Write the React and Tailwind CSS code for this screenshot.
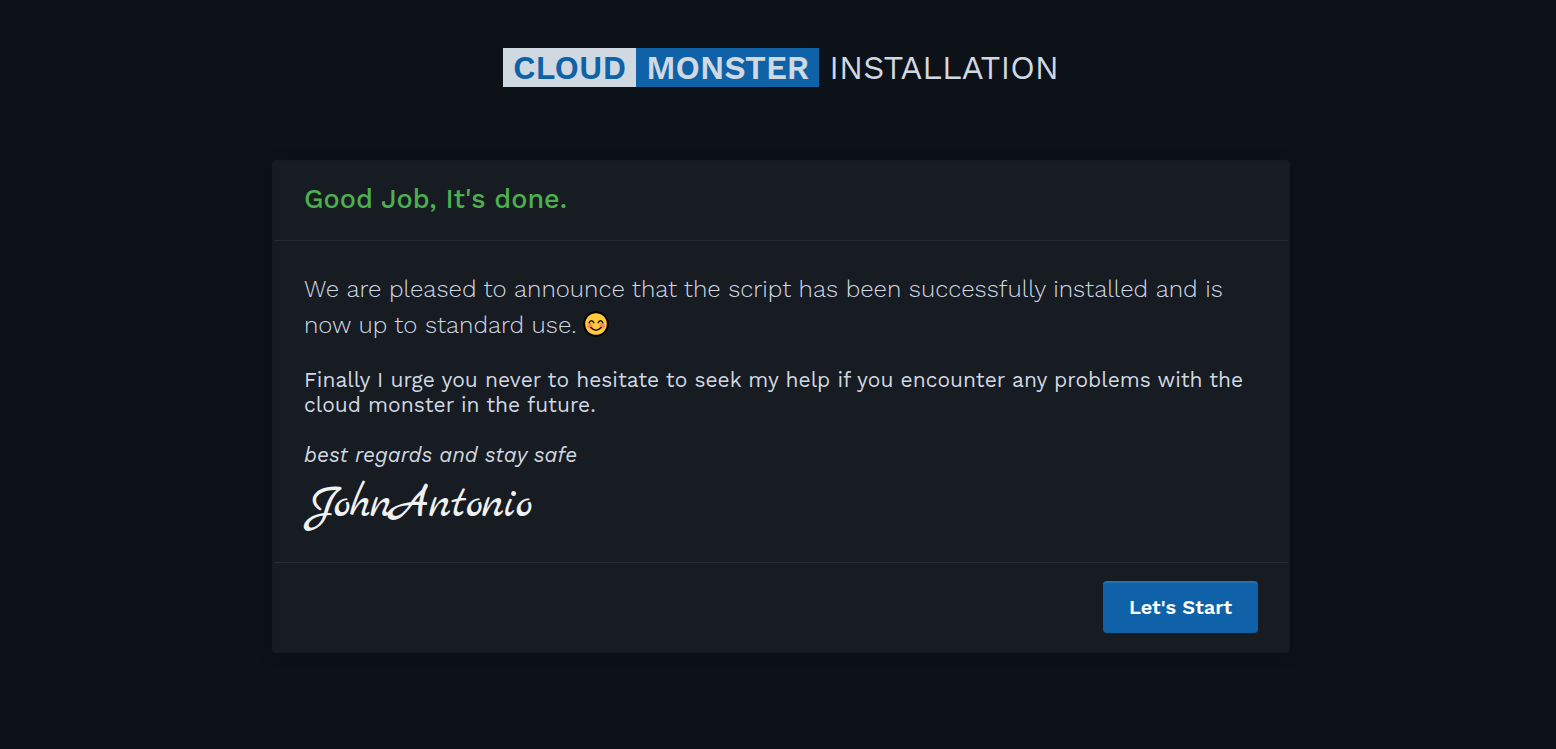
function SmileIcon() {
  return (
    <svg className="ml-[6px] inline-block size-[26px] align-[-4px]" viewBox="0 0 26 26" role="img" aria-label="Smiling face">
      <circle cx="13" cy="13" r="11.8" fill="#ffc83d" stroke="#000" strokeWidth="2" />
      <circle cx="6.9" cy="14.8" r="2.7" fill="#f98b5b" />
      <circle cx="19.1" cy="14.8" r="2.7" fill="#f98b5b" />
      <g fill="none" stroke="#1c1208" strokeWidth="1.5" strokeLinecap="round">
        <path d="M6.2 11.6Q8.4 8 10.8 11.6" />
        <path d="M15.2 11.6Q17.6 8 19.8 11.6" />
        <path d="M7.8 16.6Q13 22 18.2 16.6" />
      </g>
    </svg>
  );
}

export default function App() {
  return (
    <div className="min-h-screen bg-[#0d1118] py-12 pl-[6px] font-['Work_Sans','Inter',sans-serif] text-[#d0d8e2]">
      <h1 className="flex items-center justify-center text-[33px] leading-[39px] uppercase">
        <span className="bg-[#d0d8e1] px-[10px] font-semibold text-[#0f62a7]">Cloud</span>
        <span className="bg-[#0f62a7] px-[10px] font-semibold">Monster</span>
        <span className="ml-[10px]">Installation</span>
      </h1>

      <main className="mx-auto mt-[73px] max-w-[1018px] rounded border-2 border-[#161a21] bg-[#171b22] shadow-[0_2px_16px_rgba(0,0,0,0.15)]">
        <header className="border-b border-[#272c34] px-[30px] pt-5 pb-6">
          <h2 className="text-[27px] leading-[34px] font-medium text-[#4caf50]">Good Job, It's done.</h2>
        </header>

        <div className="px-[30px] pt-[30px] pb-6">
          <p className="text-[24px] leading-9 font-light">
            We are pleased to announce that the script has been successfully installed and is now up to standard use.
            <SmileIcon />
          </p>
          <p className="mt-6 text-[21px] leading-[25px]">
            Finally I urge you never to hesitate to seek my help if you encounter any problems with the cloud monster in the future.
          </p>
          <p className="mt-[25px] text-[21px] leading-[25px] italic">best regards and stay safe</p>
          <p className="mt-2 pb-[3px] pl-1 font-['Marck_Script','Liberation_Serif',cursive] text-[47px] leading-[60px] text-[#f1f1f1]">JohnAntonio</p>
        </div>

        <footer className="flex justify-end border-t border-[#272c34] bg-[#161c22] px-[30px] pt-[18px] pb-[18px]">
          <button type="button" className="h-[52px] rounded border-t-2 border-[#2672b0] bg-[#0f62a7] px-[26px] pb-[2px] text-[20px] font-semibold text-white">
            Let's Start
          </button>
        </footer>
      </main>
    </div>
  );
}
